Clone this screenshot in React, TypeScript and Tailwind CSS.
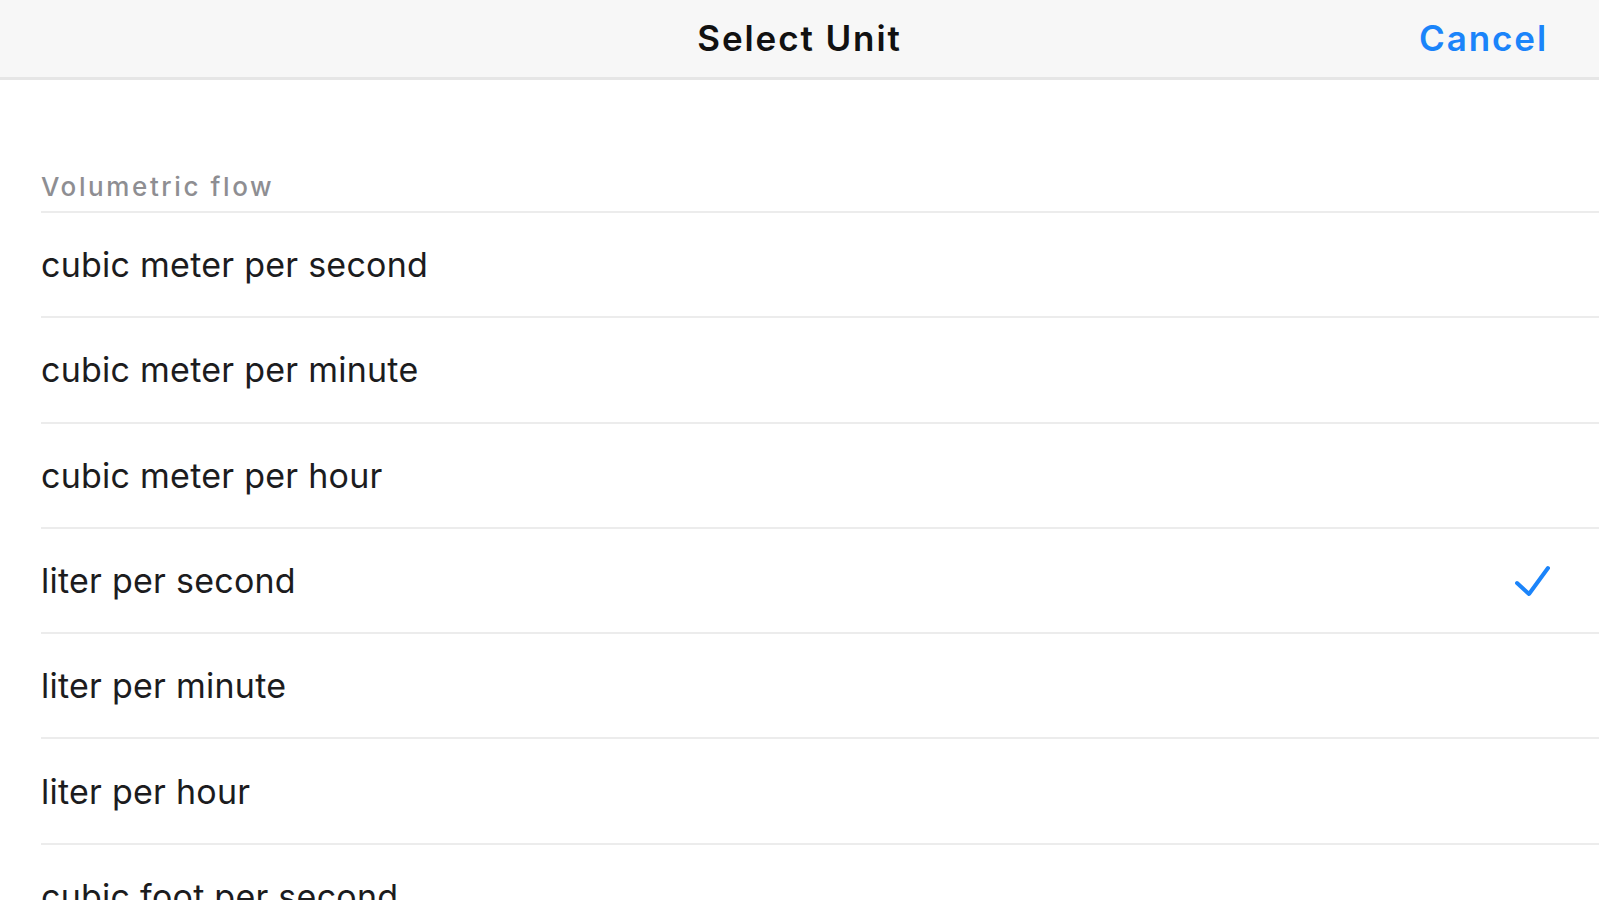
import React from "react";

const units = [
  "cubic meter per second",
  "cubic meter per minute",
  "cubic meter per hour",
  "liter per second",
  "liter per minute",
  "liter per hour",
  "cubic foot per second",
];

const selected = "liter per second";

function Check() {
  return (
    <svg width="40" height="40" viewBox="0 0 40 40" fill="none">
      <path
        d="M5 22 L17 33 L36 7"
        stroke="#1b84fa"
        strokeWidth="4"
        strokeLinecap="round"
        strokeLinejoin="round"
      />
    </svg>
  );
}

export default function App() {
  return (
    <div
      className="h-screen w-full overflow-hidden bg-white"
      style={{ fontFamily: "Inter, 'Liberation Sans', sans-serif" }}
    >
      <header className="grid h-[80px] grid-cols-[1fr_auto_1fr] items-center border-b-[3px] border-[#e6e6e6] bg-[#f7f7f7]">
        <div />
        <h1 className="text-[35px] font-semibold tracking-[1.9px] text-[#111111]">
          Select Unit
        </h1>
        <div className="flex justify-end pr-[51px]">
          <button className="text-[35px] font-semibold tracking-[1.9px] text-[#1b84fa]">
            Cancel
          </button>
        </div>
      </header>

      <div className="pl-[41px] pt-[92px] pb-[9px] text-[26px] font-medium leading-[30px] tracking-[2.6px] text-[#8e8e92]">
        Volumetric flow
      </div>

      <ul className="ml-[41px]">
        {units.map((u) => (
          <li
            key={u}
            className="flex h-[105.3px] items-center justify-between border-t-2 border-[#ececec] pr-[47px]"
          >
            <span className="text-[34px] tracking-[0.25px] text-[#1c1c1e]">{u}</span>
            {u === selected && <Check />}
          </li>
        ))}
      </ul>
    </div>
  );
}
